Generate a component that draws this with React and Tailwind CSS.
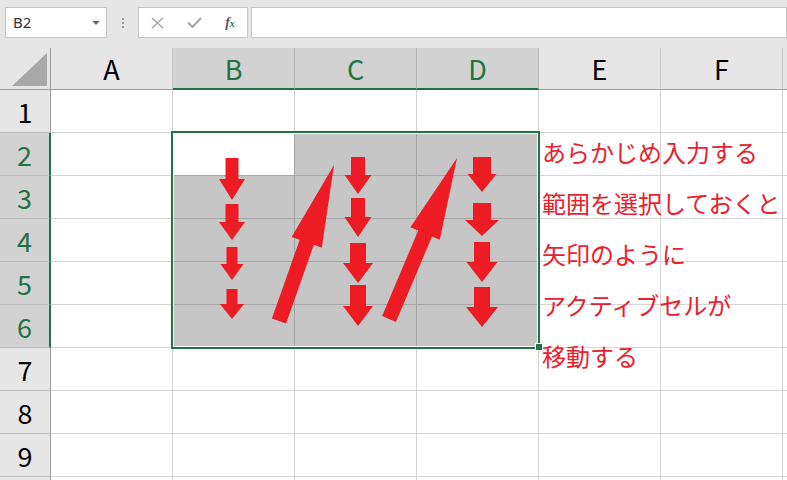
import React from "react";

const COLS = ["A", "B", "C", "D", "E", "F", ""];
const ROWS = [1, 2, 3, 4, 5, 6, 7, 8, 9, 10];

function isSel(r, c) {
  return r >= 2 && r <= 6 && c >= 1 && c <= 3;
}

function arrowPts(tail, tip, sw, hw, hl) {
  const dx = tip[0] - tail[0];
  const dy = tip[1] - tail[1];
  const len = Math.hypot(dx, dy);
  const ux = dx / len, uy = dy / len;
  const nx = -uy, ny = ux;
  const bx = tip[0] - ux * hl, by = tip[1] - uy * hl;
  const p = [
    [tail[0] + nx * sw / 2, tail[1] + ny * sw / 2],
    [bx + nx * sw / 2, by + ny * sw / 2],
    [bx + nx * hw / 2, by + ny * hw / 2],
    tip,
    [bx - nx * hw / 2, by - ny * hw / 2],
    [bx - nx * sw / 2, by - ny * sw / 2],
    [tail[0] - nx * sw / 2, tail[1] - ny * sw / 2],
  ];
  return p.map((q) => q[0].toFixed(1) + "," + q[1].toFixed(1)).join(" ");
}

function downPts(cx, y0, y1, y2, sw, hw) {
  return [
    [cx - sw / 2, y0],
    [cx + sw / 2, y0],
    [cx + sw / 2, y1],
    [cx + hw / 2, y1],
    [cx, y2],
    [cx - hw / 2, y1],
    [cx - sw / 2, y1],
  ]
    .map((q) => q[0] + "," + q[1])
    .join(" ");
}

const DOWN = [
  [232, 158, 179, 200, 13, 26],
  [232, 204, 222, 240, 13, 26],
  [232, 247, 264, 280, 11, 23],
  [232, 289, 304, 319, 11, 24],
  [358, 157, 175, 194, 14, 27],
  [358, 198, 217, 237, 14, 27],
  [358, 243, 263, 283, 16, 30],
  [358, 285, 306, 326, 16, 30],
  [482, 157, 174, 192, 18, 29],
  [482, 203, 220, 236, 18, 34],
  [482, 242, 262, 282, 16, 31],
  [482, 287, 307, 327, 16, 32],
];

const hdrFont = { fontFamily: '"Noto Sans CJK JP", "Noto Sans", sans-serif' };

export default function App() {
  return (
    <div className="relative w-[787px] h-[480px] overflow-hidden bg-white">
      {/* Top toolbar */}
      <div
        className="h-[48px] bg-[#e6e6e6] flex items-start pt-[7px] pl-[5px]"
        style={{ fontFamily: '"Noto Sans", sans-serif' }}
      >
        <div className="w-[102px] h-[31px] bg-white border border-[#c6c6c6] flex items-center justify-between pl-[7px] pr-[6px]">
          <span className="text-[15px] text-[#333]">B2</span>
          <svg width="8" height="4" viewBox="0 0 8 4">
            <polygon points="0,0 8,0 4,4" fill="#6b6b6b" />
          </svg>
        </div>
        <div className="w-[31px] h-[31px] flex flex-col items-center justify-center gap-[2px]">
          <span className="w-[2px] h-[2px] bg-[#9a9a9a]" />
          <span className="w-[2px] h-[2px] bg-[#9a9a9a]" />
          <span className="w-[2px] h-[2px] bg-[#9a9a9a]" />
        </div>
        <div className="w-[110px] h-[31px] bg-white border border-[#c6c6c6] flex items-center">
          <div className="w-[36px] flex justify-center">
            <svg width="13" height="12" viewBox="0 0 13 12">
              <path d="M1 1 L12 11 M12 1 L1 11" stroke="#a6a6a6" strokeWidth="1.4" />
            </svg>
          </div>
          <div className="w-[38px] flex justify-center">
            <svg width="15" height="11" viewBox="0 0 15 11">
              <path d="M1 5.5 L5.5 10 L14 1" stroke="#a6a6a6" strokeWidth="2" fill="none" />
            </svg>
          </div>
          <div className="w-[34px] flex justify-center">
            <span
              className="text-[14px] italic font-bold text-[#5a5a5a] leading-none"
              style={{ fontFamily: '"Liberation Serif", serif' }}
            >
              f<span className="text-[10px]">x</span>
            </span>
          </div>
        </div>
        <div className="ml-[3px] flex-1 h-[31px] bg-white border border-[#c6c6c6]" />
      </div>

      {/* Grid */}
      <div style={hdrFont}>
        {/* Column header row */}
        <div className="flex">
          <div className="w-[51px] h-[42px] shrink-0 bg-[#e6e6e6] border-r border-b border-[#9b9b9b] flex items-end justify-end pr-[3px] pb-[3px]">
            <svg width="35" height="33" viewBox="0 0 35 33">
              <polygon points="0,33 35,33 35,0" fill="#a9a9a9" />
            </svg>
          </div>
          {COLS.map((c, i) => {
            const sel = i >= 1 && i <= 3;
            return (
              <div
                key={i}
                className={
                  "w-[122px] h-[42px] shrink-0 border-r flex items-center justify-center text-[27px] " +
                  (sel
                    ? "bg-[#d2d2d2] text-[#217346] border-b-2 border-r-[#b4b4b4] border-b-[#217346]"
                    : "bg-[#e6e6e6] text-black border-b border-r-[#c8c8c8] border-b-[#9b9b9b]")
                }
              >
                <span className="leading-none">{c}</span>
              </div>
            );
          })}
        </div>

        {ROWS.map((r) => {
          const rsel = r >= 2 && r <= 6;
          return (
            <div key={r} className="flex">
              <div
                className={
                  "w-[51px] h-[43px] shrink-0 border-b border-b-[#bdbdbd] flex items-center justify-center text-[27px] " +
                  (rsel
                    ? "bg-[#d2d2d2] text-[#217346] border-r-2 border-r-[#217346]"
                    : "bg-[#e6e6e6] text-black border-r border-r-[#9b9b9b]")
                }
              >
                <span className="leading-none">{r < 10 ? r : ""}</span>
              </div>
              {COLS.map((c, i) => {
                const sel = isSel(r, i);
                const active = r === 2 && i === 1;
                return (
                  <div
                    key={i}
                    className={
                      "w-[122px] h-[43px] shrink-0 border-r border-b " +
                      (sel
                        ? (active ? "bg-white " : "bg-[#c6c6c6] ") + "border-[#a6a6a6]"
                        : "bg-white border-[#d4d4d4]")
                    }
                  />
                );
              })}
            </div>
          );
        })}
      </div>

      {/* Selection border */}
      <div className="absolute left-[171px] top-[131px] w-[369px] h-[218px] border-2 border-[#217346] pointer-events-none">
        <div className="w-full h-full border border-white" />
      </div>
      {/* Fill handle */}
      <div className="absolute left-[535px] top-[343px] w-[8px] h-[8px] bg-[#217346] border border-white" />

      {/* Arrows */}
      <svg
        className="absolute left-0 top-0 pointer-events-none"
        width="787"
        height="480"
        viewBox="0 0 787 480"
      >
        {DOWN.map((d, k) => (
          <polygon key={k} points={downPts(...d)} fill="#ed1c24" />
        ))}
        <polygon points={arrowPts([279, 321], [334, 165], 15, 32, 82)} fill="#ed1c24" />
        <polygon points={arrowPts([389, 319], [457, 158], 15, 32, 82)} fill="#ed1c24" />
      </svg>

      {/* Text box */}
      <div
        className="absolute left-[542px] top-[126px] text-[24px] leading-[51px] text-[#e8212e] whitespace-nowrap"
        style={{ fontFamily: '"Noto Sans CJK JP", sans-serif' }}
      >
        <div>あらかじめ入力する</div>
        <div>範囲を選択しておくと</div>
        <div>矢印のように</div>
        <div>アクティブセルが</div>
        <div>移動する</div>
      </div>
    </div>
  );
}
